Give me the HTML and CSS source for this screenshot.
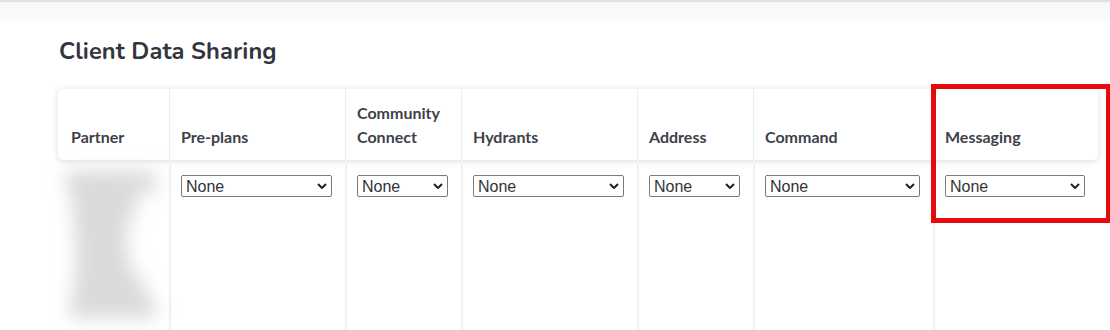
FILE: index.html
```html
<!DOCTYPE html>
<html>
<head>
<meta charset="utf-8">
<link rel="stylesheet" href="styles.css">
</head>
<body>
<div class="topbar"></div>
<main class="page">
  <h1 class="title">Client Data Sharing</h1>
  <div class="grid-wrap">
    <div class="row head">
      <div class="cell">Partner</div>
      <div class="cell">Pre-plans</div>
      <div class="cell">Community<br>Connect</div>
      <div class="cell">Hydrants</div>
      <div class="cell">Address</div>
      <div class="cell">Command</div>
      <div class="cell">Messaging</div>
    </div>
    <div class="row body">
      <div class="cell"><div class="blur"><span></span><span></span><span></span><span></span><span></span><span></span><span></span></div></div>
      <div class="cell"><div class="sel"><span>None</span><svg viewBox="0 0 10 6" width="10" height="6"><path d="M1 1l4 4 4-4" fill="none" stroke="#222" stroke-width="2"/></svg></div></div>
      <div class="cell"><div class="sel"><span>None</span><svg viewBox="0 0 10 6" width="10" height="6"><path d="M1 1l4 4 4-4" fill="none" stroke="#222" stroke-width="2"/></svg></div></div>
      <div class="cell"><div class="sel"><span>None</span><svg viewBox="0 0 10 6" width="10" height="6"><path d="M1 1l4 4 4-4" fill="none" stroke="#222" stroke-width="2"/></svg></div></div>
      <div class="cell"><div class="sel"><span>None</span><svg viewBox="0 0 10 6" width="10" height="6"><path d="M1 1l4 4 4-4" fill="none" stroke="#222" stroke-width="2"/></svg></div></div>
      <div class="cell"><div class="sel"><span>None</span><svg viewBox="0 0 10 6" width="10" height="6"><path d="M1 1l4 4 4-4" fill="none" stroke="#222" stroke-width="2"/></svg></div></div>
      <div class="cell"><div class="sel"><span>None</span><svg viewBox="0 0 10 6" width="10" height="6"><path d="M1 1l4 4 4-4" fill="none" stroke="#222" stroke-width="2"/></svg></div></div>
    </div>
  </div>
</main>
<div class="highlight"></div>
</body>
</html>
```

FILE: styles.css
```css
* { box-sizing: border-box; }
html, body { margin: 0; padding: 0; background: #fff; overflow: hidden; }
body { width: 1110px; height: 330px; position: relative; font-family: "Lato", "Liberation Sans", sans-serif; }

.topbar {
  height: 20px;
  border-top: 2px solid #e2e1e5;
  background: linear-gradient(#f7f7f8, #fbfbfc);
}

.page { padding: 0 0 0 58px; }

.title {
  margin: 16px 0 0 1px;
  font-family: "Nunito", "Lato", "Open Sans", sans-serif;
  font-weight: 700;
  font-size: 23.6px;
  line-height: 30px;
  color: #33353d;
  letter-spacing: 0.1px;
}

.grid-wrap { margin-top: 23px; width: 1040px; }

.row {
  display: grid;
  grid-template-columns: 111px 176px 116px 176px 116px 180px 165px;
}

.head {
  height: 71px;
  background: #fff;
  border-radius: 5px;
  box-shadow: 0 1px 6px rgba(40, 40, 70, 0.16);
}

.head .cell {
  display: flex;
  align-items: flex-end;
  padding: 0 11px 11px 11px;
  font-weight: 700;
  font-size: 16px;
  line-height: 24px;
  color: #3d414a;
  border-left: 1px solid #ececee;
}
.head .cell:first-child { border-left: none; padding-left: 13px; }

.body { height: 170px; }
.body .cell {
  padding: 15px 13px 0 10px;
  border-left: 2px solid #f1f1f3;
}
.body .cell:first-child { border-left: none; }

.sel {
  position: relative;
  height: 22px;
  width: 100%;
  border: 1px solid #7a7a7a;
  border-radius: 2px;
  background: #fff;
  font-family: "Liberation Sans", "DejaVu Sans", sans-serif;
  font-size: 16px;
  line-height: 21px;
  color: #333;
  padding-left: 4px;
}
.sel svg { position: absolute; right: 4px; top: 7px; }

.blur {
  margin: -4px 0 0 -2px;
  width: 95px;
  height: 150px;
  filter: blur(9px);
  display: flex;
  flex-direction: column;
  gap: 0;
}
.blur span { display: block; height: 21px; background: #dadadc; width: 70px; }
.blur span:nth-child(1) { width: 90px; }
.blur span:nth-child(2) { width: 65px; margin-left: 6px; }
.blur span:nth-child(3) { width: 55px; margin-left: 8px; }
.blur span:nth-child(4) { width: 50px; margin-left: 10px; }
.blur span:nth-child(5) { width: 55px; margin-left: 10px; }
.blur span:nth-child(6) { width: 70px; margin-left: 8px; }
.blur span:nth-child(7) { width: 85px; margin-left: 4px; }

.highlight {
  position: absolute;
  left: 931px;
  top: 84px;
  width: 180px;
  height: 139px;
  border: 5px solid #e8090d;
}
```
